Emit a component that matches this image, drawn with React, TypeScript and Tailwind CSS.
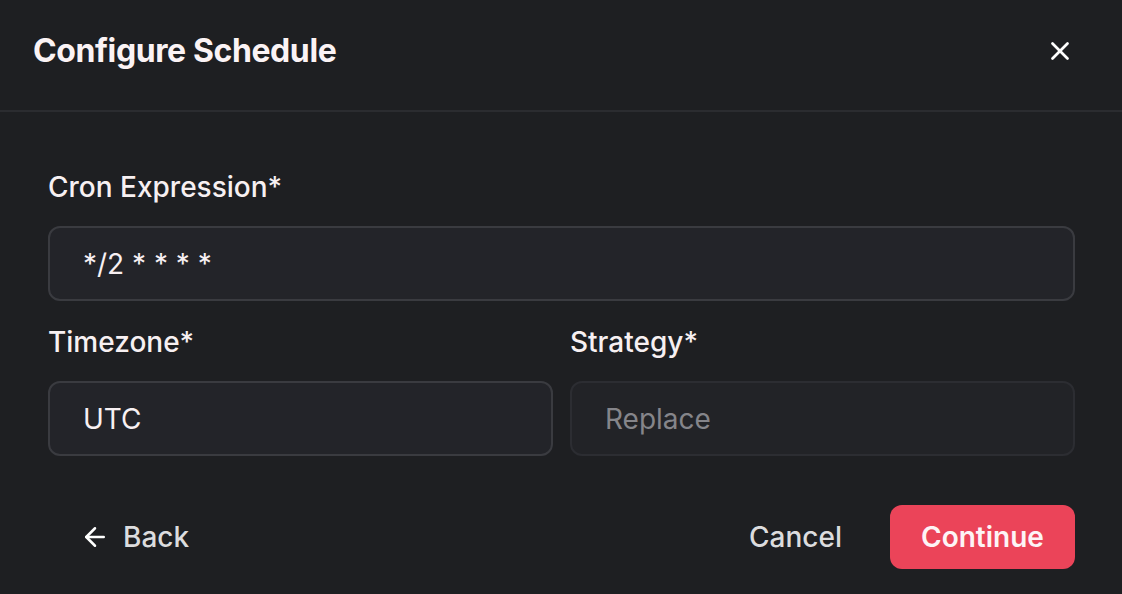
import { X, ArrowLeft } from 'lucide-react';

function Field({ label, value, disabled }: { label: string; value: string; disabled?: boolean }) {
  return (
    <div className="flex flex-col">
      <label className="text-[28px] font-medium leading-[34px] text-[#f7f0f2] mb-[22px]">{label}</label>
      <div
        className={
          disabled
            ? 'h-[75px] rounded-[12px] border-2 border-[#2c2d32] bg-[#222327] flex items-center px-[33px] text-[28px] text-[#85858a]'
            : 'h-[75px] rounded-[12px] border-2 border-[#3a3b40] bg-[#232429] flex items-center px-[33px] text-[28px] text-[#f7f0f2]'
        }
      >
        {value}
      </div>
    </div>
  );
}

export default function App() {
  return (
    <div className="w-[1122px] h-[594px] bg-[#1e1f22] flex flex-col overflow-hidden" style={{ fontFamily: 'Inter, "Noto Sans", sans-serif' }}>
      {/* Header */}
      <div className="h-[112px] shrink-0 flex items-center justify-between pl-[33px] pr-[47px] border-b-2 border-[#2b2c30] pb-[8px]">
        <h1 className="text-[32px] font-bold tracking-[-0.4px] text-[#fbf3f5]">Configure Schedule</h1>
        <X className="w-[30px] h-[30px] text-white" strokeWidth={2.2} />
      </div>

      {/* Body */}
      <div className="pl-[48px] pr-[47px] pt-[58px] flex flex-col gap-[24px]">
        <Field label="Cron Expression*" value="*/2 * * * *" />
        <div className="grid grid-cols-2 gap-[17px]">
          <Field label="Timezone*" value="UTC" />
          <Field label="Strategy*" value="Replace" disabled />
        </div>
      </div>

      {/* Footer */}
      <div className="flex items-center justify-between pl-[48px] pr-[47px] mt-[49px]">
        <button className="flex items-center gap-[13px] pl-[32px] text-[28px] font-medium text-[#dcdcde]">
          <ArrowLeft className="w-[30px] h-[30px] text-white" strokeWidth={2} />
          Back
        </button>
        <div className="flex items-center gap-[48px]">
          <button className="text-[28px] font-medium text-[#dcdcde]">Cancel</button>
          <button className="h-[64px] w-[185px] rounded-[12px] bg-[#eb4459] text-[28px] font-semibold text-[#fdf4f6]">
            Continue
          </button>
        </div>
      </div>
    </div>
  );
}
